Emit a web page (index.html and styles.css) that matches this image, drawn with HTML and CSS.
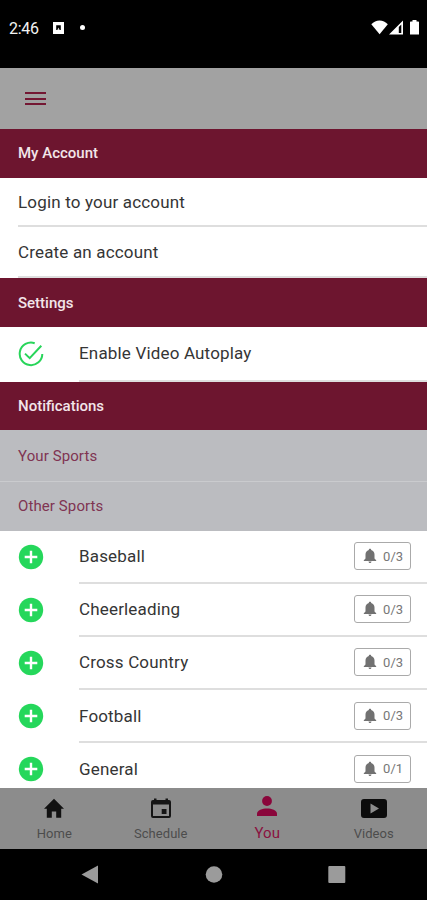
FILE: index.html
```html
<!DOCTYPE html>
<html lang="en">
<head>
<meta charset="utf-8">
<title>You</title>
<link rel="stylesheet" href="styles.css">
</head>
<body>
<svg class="defs" width="0" height="0" aria-hidden="true">
  <symbol id="plus" viewBox="0 0 26 26"><circle cx="13" cy="13" r="12.2" fill="#25d75b"/><path d="M13 6.7v12.6M6.7 13h12.6" stroke="#fff" stroke-width="2.4"/></symbol>
  <symbol id="bell" viewBox="0 0 14 16"><path fill="#717171" d="M7 .7c.8 0 1.2.5 1.2 1.2 2.2.6 3.3 2.3 3.3 4.7v4l1.7 1.6v.8H.8v-.8l1.7-1.6v-4c0-2.4 1.1-4.1 3.3-4.7C5.8 1.200 6.200.7 7 .7zM5.500 13.600h3c0 .9-.6 1.500-1.500 1.500s-1.500-.6-1.500-1.500z"/></symbol>
</svg>
<div class="phone">
  <header class="status">
    <span class="clock">2:46</span>
    <svg class="app" width="11" height="12" viewBox="0 0 11 12"><path fill="#fff" fill-rule="evenodd" d="M0 0h11v12H0zM3.200 3.200v4.800h4.600V3.200z"/><path d="M4.300 8l1.200-2.500L6.700 8z" fill="#ddd"/></svg>
    <span class="dot"></span>
    <svg class="signals" width="50" height="16" viewBox="0 0 50 16"><g fill="#fff"><path d="M.3 4.200C4.700-.9 12.500-.9 16.800 4.200L8.600 14.300z"/><path fill-rule="evenodd" d="M18 14.500L32 .5v14zM27.800 6.900v6h2.500V4.400z"/><path d="M39 2.200q0-.7.700-.7h1.800V0h4v1.500h1.800q.7 0 .7.700v12.200h-9z"/></g></svg>
  </header>
  <div class="toolbar"><i></i><i></i><i></i></div>
  <main class="list">
    <h2 class="head">My Account</h2>
    <div class="link"><span>Login to your account</span></div>
    <div class="link last"><span>Create an account</span></div>
    <h2 class="head settings">Settings</h2>
    <div class="row autoplay">
      <svg width="26" height="26" viewBox="0 0 26 26" fill="none" stroke="#28d55a" stroke-width="2"><path d="M16.700 2.200A11.300 11.300 0 1 0 24.300 13M7 12.600l4.700 4.500L23.300 4.700"/></svg>
      <span class="cell">Enable Video Autoplay</span>
    </div>
    <h2 class="head">Notifications</h2>
    <h3 class="sub yours">Your Sports</h3>
    <h3 class="sub">Other Sports</h3>
    <div class="row"><svg width="26" height="26"><use href="#plus"/></svg><div class="cell">Baseball<span class="badge"><svg width="14" height="16"><use href="#bell"/></svg>0/3</span></div></div>
    <div class="row"><svg width="26" height="26"><use href="#plus"/></svg><div class="cell">Cheerleading<span class="badge"><svg width="14" height="16"><use href="#bell"/></svg>0/3</span></div></div>
    <div class="row"><svg width="26" height="26"><use href="#plus"/></svg><div class="cell">Cross Country<span class="badge"><svg width="14" height="16"><use href="#bell"/></svg>0/3</span></div></div>
    <div class="row"><svg width="26" height="26"><use href="#plus"/></svg><div class="cell">Football<span class="badge"><svg width="14" height="16"><use href="#bell"/></svg>0/3</span></div></div>
    <div class="row"><svg width="26" height="26"><use href="#plus"/></svg><div class="cell">General<span class="badge"><svg width="14" height="16"><use href="#bell"/></svg>0/1</span></div></div>
  </main>
  <nav class="tabs">
    <div class="tab"><svg width="20" height="20" viewBox="0 0 20 20"><path fill="#111" d="M10 .8l10 9.900h-2.800V19.700h-5v-6.300H7.800v6.300h-5v-9H0z"/></svg><span>Home</span></div>
    <div class="tab"><svg width="20" height="20" viewBox="0 0 20 20"><path fill="#151515" fill-rule="evenodd" d="M3 .5h2.500V2h9V.5H17V2h1q2 0 2 2v14q0 2-2 2H2q-2 0-2-2V4q0-2 2-2h1zM2 6.500V18h16V6.500zM10.700 11h4.800v5h-4.800z"/></svg><span>Schedule</span></div>
    <div class="tab active"><svg width="20" height="20" viewBox="0 0 20 20"><g fill="#8a063b"><circle cx="10" cy="5" r="4.900"/><path d="M0 20v-2.300C0 14.300 5.500 12.500 10 12.500s10 1.800 10 5.200V20z"/></g></svg><span>You</span></div>
    <div class="tab"><svg width="26" height="20" viewBox="0 0 26 20"><path fill="#0c0c0c" fill-rule="evenodd" d="M3 1h20q3 0 3 3v13q0 3-3 3H3q-3 0-3-3V4q0-3 3-3zM9.500 5.500v10l8.500-5z"/></svg><span>Videos</span></div>
  </nav>
  <footer class="system">
    <svg width="427" height="51" viewBox="0 0 427 51"><g fill="#9b9b9b"><path d="M81.500 25.500L98 16.500v18z"/><circle cx="214" cy="25.500" r="8.300"/><rect x="328.300" y="17" width="17" height="17" rx="1"/></g></svg>
  </footer>
</div>
</body>
</html>
```
FILE: styles.css
```css
* { box-sizing: border-box; }
body { margin: 0; background: #000; font-family: Roboto, sans-serif; }
.defs { display: block; }
svg { display: block; flex: none; }
.phone { width: 427px; height: 900px; display: flex; flex-direction: column; overflow: hidden; }

.status { height: 68px; flex: none; display: flex; align-items: flex-start; padding: 20px 6px 0 9px; background: #000; color: #f3f3f3; }
.clock { width: 44px; font-size: 16px; line-height: 17px; font-weight: 400; letter-spacing: -.3px; }
.app { margin-top: 2px; }
.dot { width: 5px; height: 5px; margin: 5px 0 0 15.500px; border-radius: 50%; background: #fff; }
.signals { margin-left: auto; }

.toolbar { height: 61px; flex: none; padding: 24px 25px 0; background: #a2a2a2; display: flex; flex-direction: column; gap: 3.500px; }
.toolbar i { width: 21px; height: 2px; background: #741733; }

.list { flex: 1; min-height: 0; overflow: hidden; background: #fff; color: #353535; font-size: 17px; }
.head { height: 48.500px; margin: 0; padding: 0 18px; background: #6d152f; color: #f2e5e9; font-size: 15px; line-height: 49px; font-weight: 500; letter-spacing: 0; }
.settings { height: 49px; line-height: 50px; }
.link { height: 49.500px; padding-left: 18px; line-height: 49px; letter-spacing: .17px; }
.link span { display: block; height: 100%; border-bottom: 2px solid #dedede; }
.link.last { height: 51px; line-height: 50px; }
.row { height: 53.200px; display: flex; padding-left: 18px; }
.row > svg { margin: 13px 35px 0 0; }
.cell { flex: 1; display: flex; align-items: center; justify-content: space-between; padding-right: 16px; border-bottom: 2px solid #dedede; letter-spacing: .17px; }
.autoplay { height: 54.500px; }
.autoplay > svg { margin-top: 14px; }
.badge { width: 57px; height: 28px; display: flex; align-items: center; gap: 6px; padding-left: 8px; border: 1px solid #aaa; border-radius: 3px; color: #777; font-size: 13px; letter-spacing: .1px; }
.sub { height: 49px; margin: 0; padding: 0 18px; background: #bbbcc0; color: #803452; font-size: 15px; line-height: 49px; font-weight: 400; letter-spacing: .1px; }
.yours { height: 51.500px; line-height: 52px; border-bottom: 1px solid #cacbce; }

.tabs { height: 61px; flex: none; display: grid; grid-template-columns: repeat(4, 1fr); padding-left: 1px; background: #8c8c8c; color: #4c4c4c; }
.tab { display: flex; flex-direction: column; align-items: center; padding-top: 10px; font-size: 13px; letter-spacing: .05px; }
.tab span { margin-top: 8px; line-height: 16px; }
.active { padding-top: 8px; color: #8a123f; font-size: 15px; }
.active span { margin-top: 9px; }
.system { height: 51px; flex: none; background: #000; }
```
